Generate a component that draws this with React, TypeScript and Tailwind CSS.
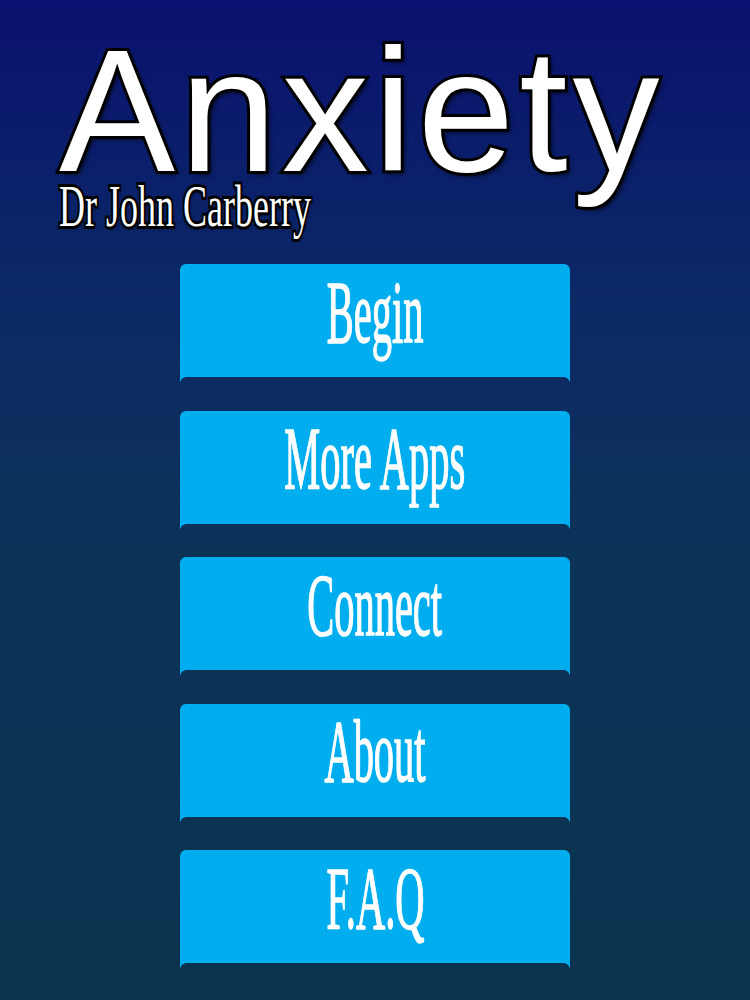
import React from 'react';

const items = ['Begin', 'More Apps', 'Connect', 'About', 'F.A.Q'];

export default function App() {
  return (
    <div className="min-h-[1000px] w-full overflow-hidden bg-[linear-gradient(180deg,#0a1170_0%,#0b2866_28%,#0c3358_55%,#0a334f_100%)]">
      {/* Title */}
      <div className="pl-[59px] pt-[41px]">
        <div className="text-[174px] leading-[0.8] tracking-[5px] text-white font-['Liberation_Sans',Arial,sans-serif] [-webkit-text-stroke:6px_#000] [paint-order:stroke_fill] [text-shadow:3px_3px_5px_rgba(0,0,0,0.8)]">
          Anxiety
        </div>
        <div className="mt-[2px] h-[48px]">
          <span className="inline-block origin-left scale-x-[0.6] whitespace-nowrap text-[60px] leading-[0.8] text-white font-['Liberation_Serif','Times_New_Roman',serif] [-webkit-text-stroke:6px_#000] [paint-order:stroke_fill] [text-shadow:2px_2px_4px_rgba(0,0,0,0.8)]">
            Dr John Carberry
          </span>
        </div>
      </div>

      {/* Menu */}
      <div className="mt-[34px] flex flex-col items-center gap-[27.5px]">
        {items.map(label => (
          <MenuButton key={label} label={label} />
        ))}
      </div>
    </div>
  );
}

function MenuButton({ label }: { label: string }) {
  return (
    <div className="w-[390px]">
      <div className="flex h-[113px] items-center justify-center rounded-t-[6px] bg-[#00aeef] pb-[16px]">
        <span className="inline-block scale-x-[0.46] whitespace-nowrap text-[88px] leading-none text-white font-['Liberation_Serif','Times_New_Roman',serif] [-webkit-text-stroke:1.5px_#fff]">
          {label}
        </span>
      </div>
      <div className="flex h-[6px]">
        <div className="h-[6px] w-[6px] bg-[radial-gradient(circle_at_100%_100%,transparent_5.5px,#00aeef_6px)]" />
        <div className="flex-1" />
        <div className="h-[6px] w-[6px] bg-[radial-gradient(circle_at_0%_100%,transparent_5.5px,#00aeef_6px)]" />
      </div>
    </div>
  );
}
